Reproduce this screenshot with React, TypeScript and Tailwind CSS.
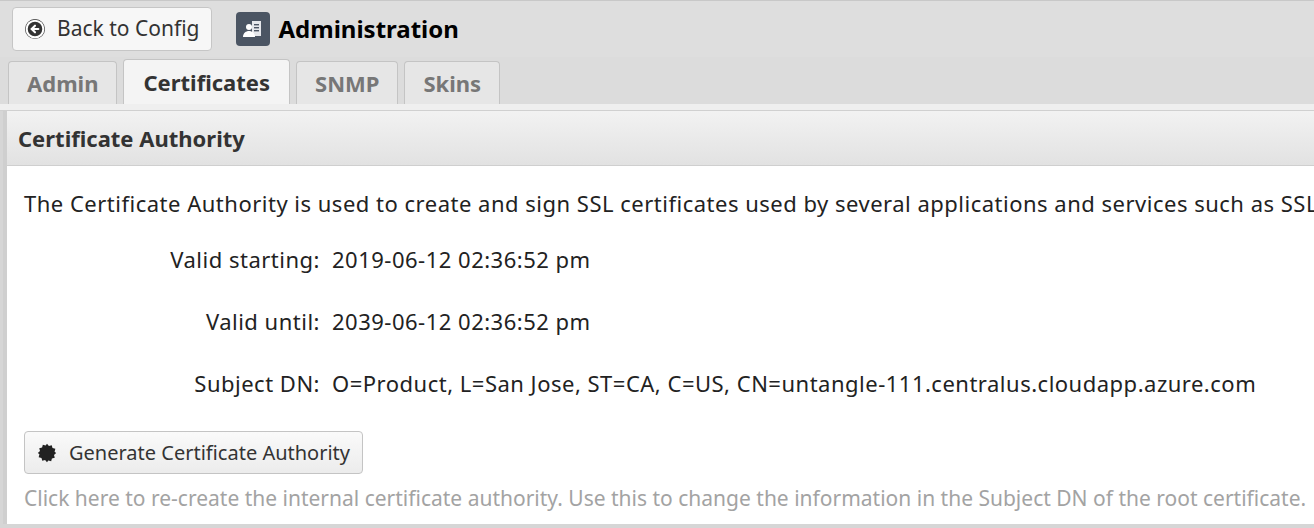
import { CircleArrowLeft } from 'lucide-react'

const Row = ({ label, value }: { label: string; value: string }) => (
  <div className="flex items-center h-[62px]">
    <div className="w-[296px] text-right">{label}</div>
    <div className="pl-3">{value}</div>
  </div>
)

export default function App() {
  return (
    <div className="h-[528px] w-[1314px] overflow-hidden bg-[#d6d6d6] text-[#222] font-['Open_Sans',sans-serif]">
      {/* top bar */}
      <div className="h-[57px] flex items-center gap-6 px-3 bg-[#dedede] border-t border-[#c8c8c8]">
        <button className="h-[44px] px-3 flex items-center gap-3 bg-[#f7f7f7] border border-[#c6c6c6] rounded text-[21px] text-[#333]">
          <span className="w-5 h-5 rounded-full bg-[#333] flex items-center justify-center">
            <CircleArrowLeft className="w-6 h-6 text-white" fill="#333" strokeWidth={2.5} />
          </span>
          Back to Config
        </button>
        <div className="flex items-center gap-2">
          <div className="w-[34px] h-[34px] rounded bg-[#4b5563] flex items-center justify-center">
            <svg viewBox="0 0 24 24" className="w-6 h-6">
              <rect x="11" y="4" width="9" height="15" fill="#e5e7eb" />
              <rect x="13" y="7" width="5" height="1.4" fill="#4b5563" />
              <rect x="13" y="10" width="5" height="1.4" fill="#4b5563" />
              <rect x="13" y="13" width="5" height="1.4" fill="#4b5563" />
              <circle cx="8" cy="10" r="3" fill="#fff" />
              <path d="M2 20c0-4 3-6 6-6s6 2 6 6z" fill="#fff" />
            </svg>
          </div>
          <span className="text-[24px] font-bold text-black">Administration</span>
        </div>
      </div>
      {/* tabs */}
      <div className="h-[47px] flex items-end gap-[6px] px-2 pt-[3px] bg-[#dcdcdc]">
        {['Admin', 'Certificates', 'SNMP', 'Skins'].map((t) => (
          <div
            key={t}
            className={
              t === 'Certificates'
                ? 'h-[45px] px-[19px] flex items-center bg-[#f4f4f4] border border-b-0 border-[#c4c4c4] rounded-t text-[22px] font-bold text-[#333]'
                : 'h-[43px] px-[18px] flex items-center bg-[#e6e6e6] border border-b-0 border-[#c4c4c4] rounded-t text-[22px] font-bold text-[#777]'
            }
          >
            {t}
          </div>
        ))}
      </div>
      <div className="h-[7px] bg-[#efefef] border-b border-[#d0d0d0]" />
      {/* panel */}
      <div className="ml-[3px] border-l-[4px] border-[#cfcfcf] bg-white">
        <div className="h-[55px] flex items-center px-[11px] bg-gradient-to-b from-[#f2f2f2] to-[#e2e2e2] border-b border-[#cfcfcf] text-[22px] font-bold text-[#333]">
          Certificate Authority
        </div>
        <div className="pl-[17px] pt-[20px] text-[22px] tracking-[0.5px] text-[#222] whitespace-nowrap">
          <div className="h-[34px] flex items-center">
            The Certificate Authority is used to create and sign SSL certificates used by several applications and services such as SSL Inspector
          </div>
          <div className="pt-[8px]">
            <Row label="Valid starting:" value="2019-06-12 02:36:52 pm" />
            <Row label="Valid until:" value="2039-06-12 02:36:52 pm" />
            <Row label="Subject DN:" value="O=Product, L=San Jose, ST=CA, C=US, CN=untangle-111.centralus.cloudapp.azure.com" />
          </div>
          <button className="mt-[17px] h-[43px] px-3 flex items-center gap-3 tracking-normal bg-gradient-to-b from-[#fafafa] to-[#ececec] border border-[#c4c4c4] rounded text-[20px] text-[#333]">
            <svg viewBox="0 0 24 24" className="w-5 h-5">
              <path
                fill="#222"
                d="M12 1l2.3 2.6 3.4-.9.9 3.4 3.4.9-.9 3.4L23 12l-2.6 2.3.9 3.4-3.4.9-.9 3.4-3.4-.9L12 23l-2.3-2.6-3.4.9-.9-3.4-3.4-.9.9-3.4L1 12l2.6-2.3-.9-3.4 3.4-.9.9-3.4 3.4.9z"
              />
            </svg>
            Generate Certificate Authority
          </button>
          <div className="h-[50px] flex items-center text-[21px] tracking-normal text-[#a3a3a3]">
            Click here to re-create the internal certificate authority. Use this to change the information in the Subject DN of the root certificate.
          </div>
        </div>
      </div>
    </div>
  )
}
